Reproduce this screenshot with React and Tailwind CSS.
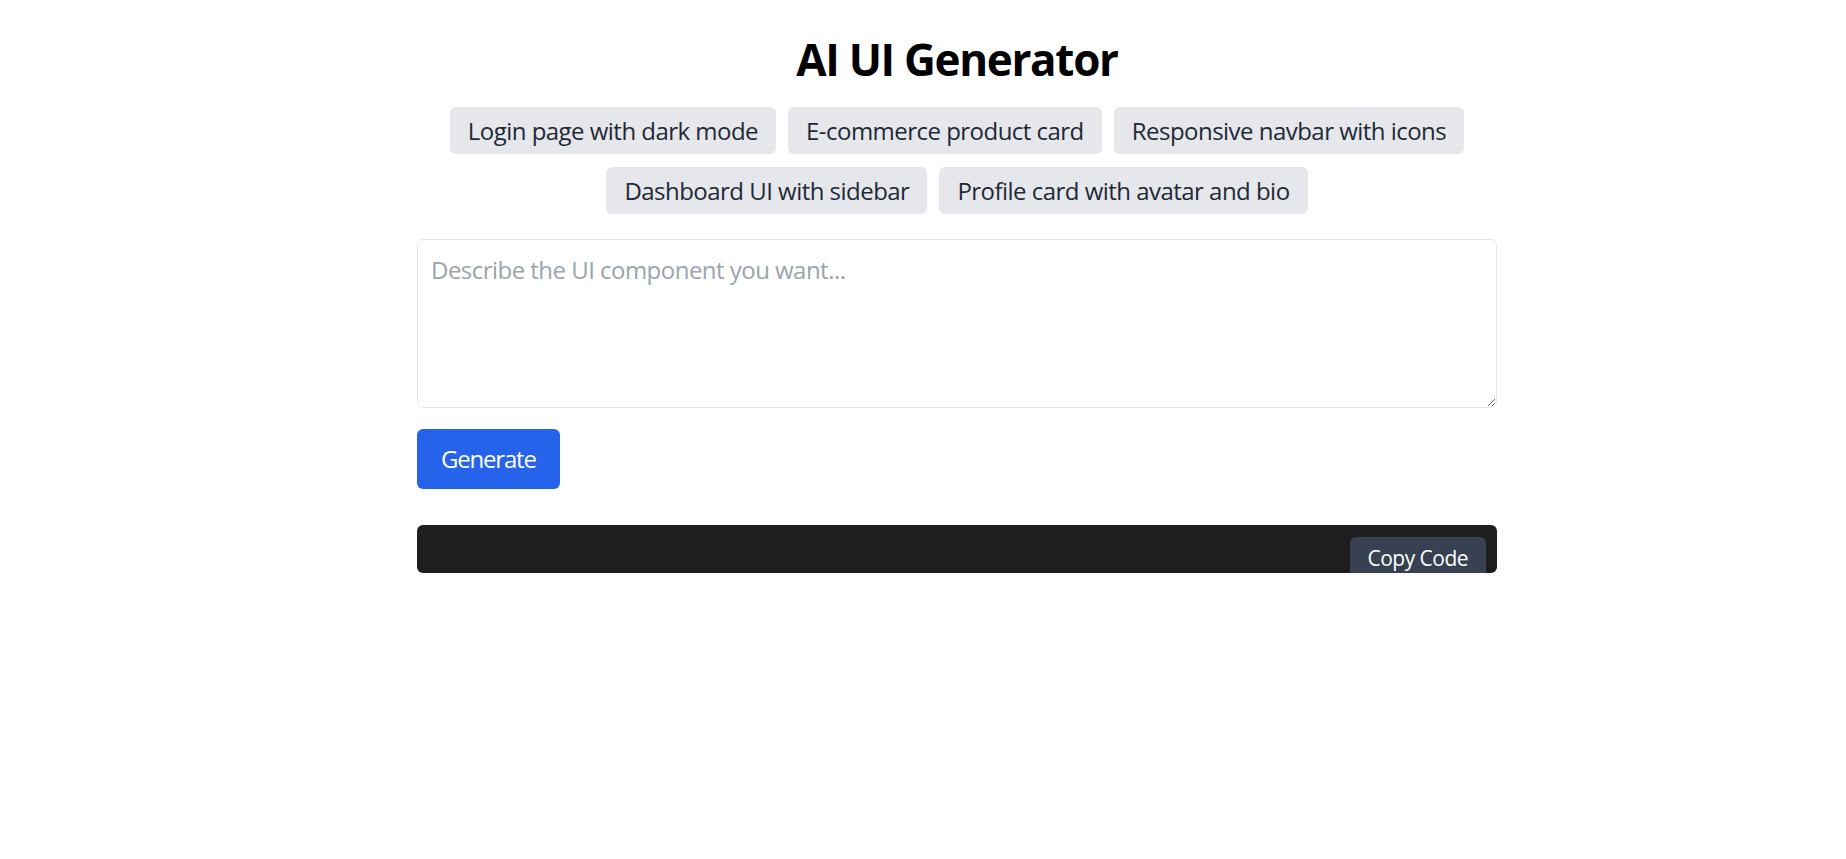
import { useState } from "react";

const PROMPTS = [
  "Login page with dark mode",
  "E-commerce product card",
  "Responsive navbar with icons",
  "Dashboard UI with sidebar",
  "Profile card with avatar and bio",
];

export default function App() {
  const [prompt, setPrompt] = useState("");

  return (
    <div className="min-h-screen bg-white pl-[68px] font-['Open_Sans',sans-serif] tracking-[-0.033em] text-black">
      <div className="mx-auto w-[1080px] pt-[32px]">
        <h1 className="text-center text-[44px] font-bold leading-[54px] tracking-[-0.03em]">AI UI Generator</h1>

        <div className="mt-[21px] flex flex-wrap justify-center gap-x-[12px] gap-y-[13px]">
          {PROMPTS.map((p) => (
            <button
              key={p}
              onClick={() => setPrompt(p)}
              className="rounded-[6px] bg-[#e5e7eb] px-[18px] py-[6px] text-[24px] leading-[35px] text-[#1f2937]"
            >
              {p}
            </button>
          ))}
        </div>

        <textarea
          value={prompt}
          onChange={(e) => setPrompt(e.target.value)}
          placeholder="Describe the UI component you want..."
          className="mt-[25px] block h-[169px] w-full rounded-[6px] border border-[#e5e7eb] px-[13px] py-[12px] text-[24px] leading-[36px] text-[#1f2937] placeholder:text-[#9ca3af] focus:outline-none"
        />

        <button className="mt-[21px] rounded-[6px] bg-[#2563eb] px-[24px] py-[12px] text-[24px] leading-[36px] tracking-[-0.05em] text-white">
          Generate
        </button>

        <div className="relative mt-[36px] h-[48px] overflow-hidden rounded-[6px] bg-[#1e1e1e]">
          <button className="absolute right-[11px] top-[12px] rounded-[6px] bg-[#374151] px-[18px] py-[6px] text-[21px] leading-[30px] text-white">
            Copy Code
          </button>
        </div>
      </div>
    </div>
  );
}
